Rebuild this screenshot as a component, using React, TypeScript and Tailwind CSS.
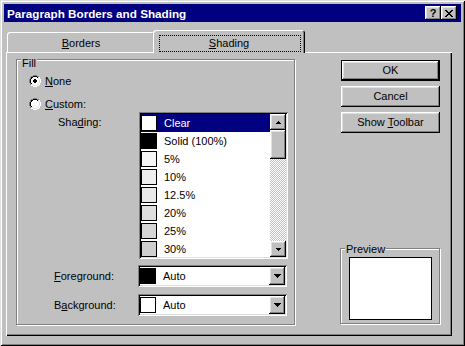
import type { ReactNode } from 'react';

// classic 3d edges, drawn with inset shadows so they don't take layout space
const RAISED =
  'shadow-[inset_-1px_-1px_0_#000,inset_1px_1px_0_#fff,inset_-2px_-2px_0_#808080,inset_2px_2px_0_#dfdfdf]';
const SUNKEN =
  'shadow-[inset_1px_1px_0_#808080,inset_-1px_-1px_0_#fff,inset_2px_2px_0_#000,inset_-2px_-2px_0_#dfdfdf]';
const ETCHED = 'border border-[#808080] shadow-[inset_1px_1px_0_#fff,1px_1px_0_#fff]';

const PX: Record<string, string> = {
  g: '#808080',
  k: '#000000',
  w: '#ffffff',
  l: '#dfdfdf',
};

function Pixels({ rows, className }: { rows: string[]; className?: string }): JSX.Element {
  const w = rows[0].length;
  const h = rows.length;
  return (
    <svg
      width={w}
      height={h}
      viewBox={`0 0 ${w} ${h}`}
      shapeRendering="crispEdges"
      className={className}
    >
      {rows.flatMap((row, y) =>
        row.split('').map((c, x) =>
          PX[c] ? <rect key={`${x}-${y}`} x={x} y={y} width="1" height="1" fill={PX[c]} /> : null,
        ),
      )}
    </svg>
  );
}

const RADIO_OFF = [
  '....gggg....',
  '..ggkkkkgg..',
  '.gkkwwwwklw.',
  '.gkwwwwwwlw.',
  'gkwwwwwwwwlw',
  'gkwwwwwwwwlw',
  'gkwwwwwwwwlw',
  'gkwwwwwwwwlw',
  '.gkwwwwwwlw.',
  '.gllwwwwllw.',
  '..wwllllww..',
  '....wwww....',
];

const RADIO_ON = [
  '....gggg....',
  '..ggkkkkgg..',
  '.gkkwwwwklw.',
  '.gkwwwwwwlw.',
  'gkwwwkkwwwlw',
  'gkwwkkkkwwlw',
  'gkwwkkkkwwlw',
  'gkwwwkkwwwlw',
  '.gkwwwwwwlw.',
  '.gllwwwwllw.',
  '..wwllllww..',
  '....wwww....',
];

const CLOSE_X = ['kk....kk', '.kk..kk.', '..kkkk..', '...kk...', '..kkkk..', '.kk..kk.', 'kk....kk'];
const ARROW_DOWN = ['kkkkkkk', '.kkkkk.', '..kkk..', '...k...'];
const SCROLL_UP = ['..k..', '.kkk.', 'kkkkk'];
const SCROLL_DOWN = ['kkkkk', '.kkk.', '..k..'];

const SHADES = [
  { label: 'Clear', swatch: 'bg-white' },
  { label: 'Solid (100%)', swatch: 'bg-black' },
  { label: '5%', swatch: 'bg-[#f6f6f6]' },
  { label: '10%', swatch: 'bg-[#eeeeee]' },
  { label: '12.5%', swatch: 'bg-[#e8e8e8]' },
  { label: '20%', swatch: 'bg-[#dedede]' },
  { label: '25%', swatch: 'bg-[#d6d6d6]' },
  { label: '30%', swatch: 'bg-[#cecece]' },
];

function Radio({ checked, children }: { checked?: boolean; children: ReactNode }): JSX.Element {
  return (
    <div className="ml-[12px] flex h-[12px] items-center gap-[4px]">
      <Pixels rows={checked ? RADIO_ON : RADIO_OFF} className="shrink-0" />
      <span>{children}</span>
    </div>
  );
}

function PushButton({ children, isDefault }: { children: ReactNode; isDefault?: boolean }): JSX.Element {
  return (
    <div
      className={`ml-[1px] flex h-[21px] w-[99px] items-center justify-center bg-[#c0c0c0] ${
        isDefault ? 'border border-black' : ''
      }`}
    >
      <div className={`flex h-full w-full items-center justify-center ${RAISED}`}>{children}</div>
    </div>
  );
}

function ShadingList(): JSX.Element {
  return (
    <div className={`flex h-[147px] w-[149px] bg-white p-[2px] ${SUNKEN}`}>
      <div className="w-[129px] overflow-hidden">
        {SHADES.map((s, i) => (
          <div
            key={s.label}
            className={`flex h-[18px] items-center gap-[7px] ${
              i === 0 ? 'bg-[#000080] text-white' : 'text-black'
            }`}
          >
            <div className={`h-[16px] w-[16px] shrink-0 border border-black ${s.swatch}`} />
            <span>{s.label}</span>
          </div>
        ))}
      </div>
      <div className="flex w-[16px] flex-col">
        <div className={`flex h-[16px] items-center justify-center bg-[#c0c0c0] ${RAISED}`}>
          <Pixels rows={SCROLL_UP} />
        </div>
        <div className="flex flex-1 flex-col bg-[repeating-conic-gradient(#c0c0c0_0%_25%,#ffffff_0%_50%)] bg-[length:2px_2px]">
          <div className={`h-[29px] bg-[#c0c0c0] ${RAISED}`} />
        </div>
        <div className={`flex h-[16px] items-center justify-center bg-[#c0c0c0] ${RAISED}`}>
          <Pixels rows={SCROLL_DOWN} />
        </div>
      </div>
    </div>
  );
}

function ColorCombo({ swatch }: { swatch: string }): JSX.Element {
  return (
    <div className={`flex h-[22px] w-[149px] items-center bg-white p-[2px] ${SUNKEN}`}>
      <div className={`h-[16px] w-[16px] shrink-0 border border-black ${swatch}`} />
      <span className="ml-[7px]">Auto</span>
      <div className={`ml-auto flex h-[18px] w-[16px] items-center justify-center bg-[#c0c0c0] ${RAISED}`}>
        <Pixels rows={ARROW_DOWN} />
      </div>
    </div>
  );
}

export default function App(): JSX.Element {
  return (
    <div
      className="flex h-[346px] w-[465px] select-none flex-col bg-[#c0c0c0] p-[4px] font-[family-name:'Liberation_Sans',Arial,sans-serif] text-[11px] leading-[13px] text-black shadow-[inset_1px_1px_0_#dfdfdf,inset_-1px_-1px_0_#000,inset_2px_2px_0_#fff,inset_-2px_-2px_0_#808080]"
    >
      {/* caption */}
      <div className="flex h-[18px] shrink-0 items-center bg-[#000080] pl-[3px] pr-[4px]">
        <span className="text-[11.7px] font-bold text-white">Paragraph Borders and Shading</span>
        <div className="ml-auto flex">
          <div className={`flex h-[14px] w-[16px] items-center justify-center bg-[#c0c0c0] ${RAISED}`}>
            <span className="text-[11px] leading-[11px] font-bold">?</span>
          </div>
          <div className={`flex h-[14px] w-[16px] items-center justify-center bg-[#c0c0c0] ${RAISED}`}>
            <Pixels rows={CLOSE_X} />
          </div>
        </div>
      </div>

      {/* tabs */}
      <div className="relative z-10 mt-[8px] flex h-[22px] shrink-0 items-end pl-[3px]">
        <div className="flex h-[20px] w-[148px] justify-center rounded-t-[3px] pt-[5px] shadow-[inset_1px_1px_0_#fff,inset_-1px_0_0_#000,inset_-2px_0_0_#808080]">
          <span>
            <u>B</u>orders
          </span>
        </div>
        <div className="relative -mb-[1px] -ml-[2px] flex h-[23px] w-[152px] justify-center rounded-t-[3px] bg-[#c0c0c0] pt-[7px] shadow-[inset_1px_1px_0_#fff,inset_-1px_0_0_#000,inset_-2px_0_0_#808080]">
          <span>
            <u>S</u>hading
          </span>
          <div className="absolute left-[6px] top-[5px] h-[17px] w-[142px] border border-dotted border-black" />
        </div>
      </div>

      {/* tab page */}
      <div className="ml-[2px] flex h-[284px] w-[446px] shrink-0 items-start shadow-[inset_1px_1px_0_#fff,inset_-1px_-1px_0_#000,inset_-2px_-2px_0_#808080]">
        <div className={`relative ml-[10px] mt-[7px] flex h-[266px] w-[279px] flex-col ${ETCHED}`}>
          <span className="absolute -top-[3px] left-[4px] bg-[#c0c0c0] px-[1px]">Fill</span>

          <div className="mt-[15px]">
            <Radio checked>
              <u>N</u>one
            </Radio>
          </div>
          <div className="mt-[11px]">
            <Radio>
              <u>C</u>ustom:
            </Radio>
          </div>

          <div className="mt-[2px] flex">
            <span className="ml-[41px] w-[81px] pt-[4px]">
              Sha<u>d</u>ing:
            </span>
            <ShadingList />
          </div>

          <div className="mt-[6px] flex h-[22px] items-center">
            <span className="ml-[37px] w-[84px]">
              <u>F</u>oreground:
            </span>
            <ColorCombo swatch="bg-black" />
          </div>

          <div className="mt-[7px] flex h-[22px] items-center">
            <span className="ml-[37px] w-[84px]">
              B<u>a</u>ckground:
            </span>
            <ColorCombo swatch="bg-white" />
          </div>
        </div>

        <div className="ml-[45px] mt-[8px] flex w-[100px] flex-col">
          <PushButton isDefault>OK</PushButton>
          <div className="mt-[5px]">
            <PushButton>Cancel</PushButton>
          </div>
          <div className="mt-[5px]">
            <PushButton>
              <span>
                Show <u>T</u>oolbar
              </span>
            </PushButton>
          </div>

          <div className={`relative mt-[115px] h-[76px] w-[100px] ${ETCHED}`}>
            <span className="absolute -top-[6px] left-[4px] bg-[#c0c0c0] px-[1px]">Preview</span>
            <div className="ml-[8px] mt-[8px] h-[63px] w-[83px] border border-black bg-white" />
          </div>
        </div>
      </div>
    </div>
  );
}
